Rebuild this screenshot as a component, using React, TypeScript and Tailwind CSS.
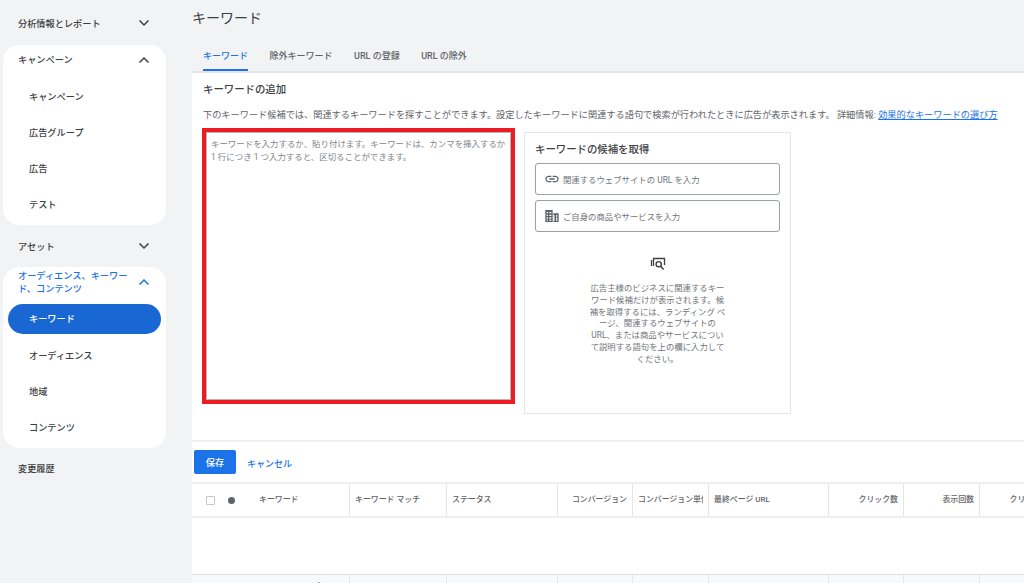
import React from "react";

const font = { fontFamily: '"Roboto","Noto Sans CJK JP",sans-serif' };

function Chevron({ up = false, color = "#3c4043" }: { up?: boolean; color?: string }) {
  return (
    <svg width="12" height="8" viewBox="0 0 12 8" fill="none" className="shrink-0">
      <path d={up ? "M1.5 6.5 6 2l4.5 4.5" : "M1.5 1.5 6 6l4.5-4.5"} stroke={color} strokeWidth="1.5" />
    </svg>
  );
}

function SubItem({ label, active = false }: { label: string; active?: boolean }) {
  return (
    <div
      className={
        active
          ? "mx-[5px] mt-[1px] flex h-[30px] items-center rounded-full bg-[#1967d2] pl-[21px] text-[9.2px] font-medium text-white"
          : "flex h-[36px] items-center pl-[26px] pt-[2px] text-[9.2px] font-medium text-[#3c4043]"
      }
    >
      {label}
    </div>
  );
}

function Sidebar() {
  return (
    <aside className="flex w-[192px] shrink-0 flex-col bg-[#f1f3f4]">
      <div className="flex h-[45px] w-[166px] items-center justify-between pl-[18px] pr-[16px] text-[9.2px] font-medium text-[#3c4043]">
        <span className="pt-[2px]">分析情報とレポート</span>
        <Chevron />
      </div>
      <div className="mx-[3px] w-[163px] rounded-[16px] bg-white pb-[3px]">
        <div className="flex h-[29px] items-center justify-between pl-[15px] pr-[16px] text-[9.2px] font-medium text-[#3c4043]">
          <span>キャンペーン</span>
          <Chevron up />
        </div>
        <div className="mt-[4px]">
          <SubItem label="キャンペーン" />
          <SubItem label="広告グループ" />
          <SubItem label="広告" />
          <SubItem label="テスト" />
        </div>
      </div>
      <div className="flex h-[42px] w-[166px] items-center justify-between pl-[18px] pr-[16px] text-[9.2px] font-medium text-[#3c4043]">
        <span className="pt-[2px]">アセット</span>
        <Chevron />
      </div>
      <div className="mx-[3px] w-[163px] rounded-[16px] bg-white pb-[3px]">
        <div className="flex h-[36px] items-center justify-between pb-[6px] pl-[15px] pr-[16px] text-[9.2px] font-medium leading-[13px] text-[#1a73e8]">
          <span className="w-[115px]">オーディエンス、キーワード、コンテンツ</span>
          <Chevron up color="#1a73e8" />
        </div>
        <SubItem label="キーワード" active />
        <div className="mt-[3px]">
          <SubItem label="オーディエンス" />
          <SubItem label="地域" />
          <SubItem label="コンテンツ" />
        </div>
      </div>
      <div className="flex h-[40px] items-center pl-[18px] pt-[2px] text-[9.2px] font-medium text-[#3c4043]">変更履歴</div>
    </aside>
  );
}

function Tabs() {
  const tabs = ["除外キーワード", "URL の登録", "URL の除外"];
  return (
    <div className="h-[73px] border-b-2 border-[#e2e4e6] bg-[#f1f3f4]">
      <div className="pt-[9px] text-[14px] leading-[18px] text-[#3c4043]">キーワード</div>
      <div className="mt-[18px] flex h-[26px] items-start gap-[21.5px] pl-[11px] text-[9px] font-medium leading-[22px] text-[#5f6368]">
        <div className="h-[26px] border-b-2 border-[#1a73e8] text-[#1a73e8]">キーワード</div>
        {tabs.map((t) => (
          <div key={t}>{t}</div>
        ))}
      </div>
    </div>
  );
}

function LinkIcon() {
  return (
    <svg width="16" height="16" viewBox="0 0 24 24" fill="#5f6368" className="shrink-0">
      <path d="M3.9 12c0-1.71 1.39-3.1 3.1-3.1h4V7H7c-2.76 0-5 2.24-5 5s2.24 5 5 5h4v-1.9H7c-1.71 0-3.1-1.39-3.1-3.1zM8 13h8v-2H8v2zm9-6h-4v1.9h4c1.71 0 3.1 1.39 3.1 3.1s-1.39 3.1-3.1 3.1h-4V17h4c2.76 0 5-2.24 5-5s-2.24-5-5-5z" />
    </svg>
  );
}

function BuildingIcon() {
  return (
    <svg width="16" height="16" viewBox="0 0 24 24" fill="#5f6368" className="shrink-0">
      <path d="M2 3h11v18H2V3zm2 3v2h2V6H4zm4 0v2h3V6H8zM4 10v2h2v-2H4zm4 0v2h3v-2H8zm-4 4v2h2v-2H4zm4 0v2h3v-2H8zm-4 3.5V19h2v-1.5H4zm4 0V19h3v-1.5H8zM14 8h8v13h-8v-2h2v-2h-2v-1h2v-2h-2v-1h2v-2h-2V8zm4 3v2h2v-2h-2zm0 3.5v2h2v-2h-2zm0 2.5v2h2v-2h-2z" />
    </svg>
  );
}

function SearchCardIcon() {
  return (
    <svg width="16" height="16" viewBox="0 0 16 16" fill="none" className="shrink-0">
      <path d="M3.5 10V2.5h11V9" stroke="#3c4043" strokeWidth="1.3" />
      <path d="M1.5 4v6" stroke="#3c4043" strokeWidth="1.3" />
      <circle cx="8.7" cy="8.2" r="2.6" stroke="#3c4043" strokeWidth="1.4" />
      <path d="m10.6 10.2 3 3.3" stroke="#3c4043" strokeWidth="1.5" />
    </svg>
  );
}

function InputBox({ icon, label }: { icon: React.ReactNode; label: string }) {
  return (
    <div className="flex h-[32px] items-center gap-[3px] rounded-[3px] border border-[#9aa0a6] pl-[8px] text-[8.4px] text-[#70757a]">
      {icon}
      <span className="pt-[2px]">{label}</span>
    </div>
  );
}

function Panel() {
  return (
    <div className="ml-[9px] mt-[4px] flex h-[282px] w-[267px] flex-col border border-[#e4e6e8] px-[10px]">
      <div className="mt-[10px] text-[10.4px] font-medium leading-[14px] text-[#3c4043]">キーワードの候補を取得</div>
      <div className="mt-[6px] flex w-[245px] flex-col gap-[5px]">
        <InputBox icon={<LinkIcon />} label="関連するウェブサイトの URL を入力" />
        <InputBox icon={<BuildingIcon />} label="ご自身の商品やサービスを入力" />
      </div>
      <div className="mt-[24px] flex justify-center">
        <SearchCardIcon />
      </div>
      <p className="mx-auto mt-[11px] w-[138px] text-center text-[8.4px] leading-[11.8px] text-[#70757a]">
        広告主様のビジネスに関連するキーワード候補だけが表示されます。候補を取得するには、ランディング ページ、関連するウェブサイトの URL、または商品やサービスについて説明する語句を上の欄に入力してください。
      </p>
    </div>
  );
}

const cols: { label: string; w: string; right?: boolean }[] = [
  { label: "キーワード マッチ", w: "w-[97px]" },
  { label: "ステータス", w: "w-[111px]" },
  { label: "コンバージョン", w: "w-[75px]", right: true },
  { label: "コンバージョン単価", w: "w-[76px]" },
  { label: "最終ページ URL", w: "w-[120px]" },
  { label: "クリック数", w: "w-[75px]", right: true },
  { label: "表示回数", w: "w-[76px]", right: true },
  { label: "クリック率", w: "w-[75px]", right: true },
];

function KeywordTable() {
  return (
    <div>
      <div className="flex h-[36px] border-y-2 border-[#eeeff1] text-[7.9px] font-medium text-[#5f6368]">
        <div className="flex w-[158px] shrink-0 items-center border-r border-[#e4e6e8] pl-[14px]">
          <div className="h-[9px] w-[9px] rounded-[1px] border border-[#c4c7c9]" />
          <div className="ml-[13px] h-[7px] w-[7px] rounded-full bg-[#5f6368]" />
          <span className="ml-[24px]">キーワード</span>
        </div>
        {cols.map((c) => (
          <div
            key={c.label}
            className={
              c.right
                ? `flex ${c.w} shrink-0 items-center justify-end whitespace-nowrap border-r border-[#e4e6e8] pr-[5px]`
                : `flex ${c.w} shrink-0 items-center border-r border-[#e4e6e8] px-[5px]`
            }
          >
            <div className={c.right ? "" : "overflow-hidden whitespace-nowrap"}>{c.label}</div>
          </div>
        ))}
      </div>
      <div className="h-[56px]" />
      <div className="flex h-[10px] border-t border-[#e0e2e4] bg-[#f8f9fa]">
        <div className="flex w-[158px] shrink-0 justify-end border-r border-[#e4e6e8] pr-[27px] pt-[6px]">
          <svg width="6" height="3" viewBox="0 0 6 3" fill="none">
            <path d="M1 3C1.5 1.5 4.5 1.5 5 3" stroke="#70757a" strokeWidth="1" />
          </svg>
        </div>
        {cols.map((c) => (
          <div key={c.label} className={`${c.w} shrink-0 border-r border-[#e4e6e8]`} />
        ))}
      </div>
    </div>
  );
}

function Main() {
  return (
    <main className="min-w-0 flex-1 overflow-hidden bg-white">
      <Tabs />
      <div className="h-[369px] border-b-2 border-[#eeeff1] pl-[10px]">
        <div className="pl-[1px] pt-[9px] text-[10.4px] font-medium leading-[16px] text-[#3c4043]">キーワードの追加</div>
        <div className="mt-[10px] whitespace-nowrap pl-[1px] text-[9.2px] leading-[14px] text-[#5f6368]">
          下のキーワード候補では、関連するキーワードを探すことができます。設定したキーワードに関連する語句で検索が行われたときに広告が表示されます。 詳細情報:{" "}
          <span className="text-[#1a73e8] underline">効果的なキーワードの選び方</span>
        </div>
        <div className="mt-[6px] flex items-start">
          <div className="h-[276px] w-[313px] shrink-0 border-4 border-[#ed1c24]">
            <div className="h-full border border-[#b4b7ba] pl-[4px] pt-[5px] text-[8.45px] leading-[12.7px] text-[#80868b]">
              キーワードを入力するか、貼り付けます。キーワードは、カンマを挿入するか
              <br />
              1 行につき 1 つ入力すると、区切ることができます。
            </div>
          </div>
          <Panel />
        </div>
      </div>
      <div className="flex h-[40px] items-start pl-[2px] pt-[8px]">
        <div className="flex h-[24px] w-[42px] items-center justify-center rounded-[2px] bg-[#1a73e8] pt-[2px] text-[9.2px] font-medium text-white">
          保存
        </div>
        <div className="ml-[11px] pt-[2px] text-[9px] font-medium leading-[24px] text-[#1a73e8]">キャンセル</div>
      </div>
      <KeywordTable />
    </main>
  );
}

export default function App() {
  return (
    <div className="flex h-[583px] w-[1024px] overflow-hidden bg-[#f1f3f4]" style={font}>
      <Sidebar />
      <Main />
    </div>
  );
}
